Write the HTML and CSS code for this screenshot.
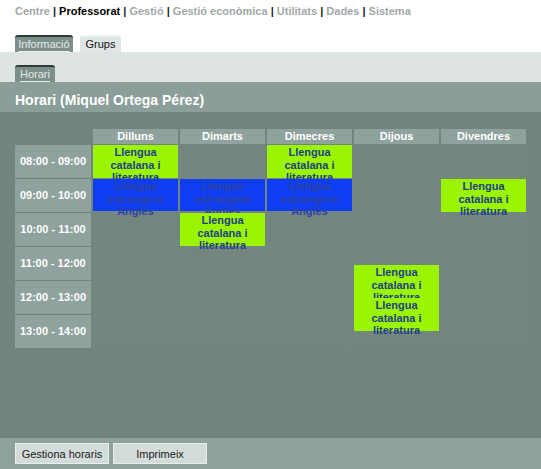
FILE: index.html
```html
<!DOCTYPE html>
<html lang="ca">
<head>
<meta charset="utf-8">
<title>Horari</title>
<link rel="stylesheet" href="styles.css">
</head>
<body>
<div class="topnav">
  <a class="nav">Centre</a> | <a class="nav active">Professorat</a> | <a class="nav">Gestió</a> | <a class="nav">Gestió econòmica</a> | <a class="nav">Utilitats</a> | <a class="nav">Dades</a> | <a class="nav">Sistema</a>
</div>
<div class="tabs">
  <div class="tab dark tab-info"><span>Informació</span></div>
  <div class="tab light tab-grups"><span>Grups</span></div>
</div>
<div class="band">
  <div class="tab dark tab-horari"><span>Horari</span></div>
</div>
<div class="titlebar">Horari (Miquel Ortega Pérez)</div>
<div class="main">
  <div class="sched-wrap">
    <div class="sched">
      <div class="corner"></div>
      <div class="head">Dilluns</div>
      <div class="head">Dimarts</div>
      <div class="head">Dimecres</div>
      <div class="head">Dijous</div>
      <div class="head">Divendres</div>

      <div class="time">08:00 - 09:00</div>
      <div class="empty"></div><div class="empty"></div><div class="empty"></div><div class="empty"></div><div class="empty"></div>
      <div class="time">09:00 - 10:00</div>
      <div class="empty"></div><div class="empty"></div><div class="empty"></div><div class="empty"></div><div class="empty"></div>
      <div class="time">10:00 - 11:00</div>
      <div class="empty"></div><div class="empty"></div><div class="empty"></div><div class="empty"></div><div class="empty"></div>
      <div class="time">11:00 - 12:00</div>
      <div class="empty"></div><div class="empty"></div><div class="empty"></div><div class="empty"></div><div class="empty"></div>
      <div class="time">12:00 - 13:00</div>
      <div class="empty"></div><div class="empty"></div><div class="empty"></div><div class="empty"></div><div class="empty"></div>
      <div class="time">13:00 - 14:00</div>
      <div class="empty"></div><div class="empty"></div><div class="empty"></div><div class="empty"></div><div class="empty"></div>
    </div>
    <div class="sched events">
      <div class="ev green c-dl r-08">Llengua catalana i literatura</div>
      <div class="ev green c-dc r-08">Llengua catalana i literatura</div>
      <div class="ev blue c-dl r-09">Llengua estrangera Anglès</div>
      <div class="ev blue c-dm r-09">Llengua estrangera Anglès</div>
      <div class="ev blue c-dc r-09">Llengua estrangera Anglès</div>
      <div class="ev green c-dv r-09">Llengua catalana i literatura</div>
      <div class="ev green c-dm r-10">Llengua catalana i literatura</div>
      <div class="ev green c-dj r-11 half">Llengua catalana i literatura</div>
      <div class="ev green c-dj r-12 half2">Llengua catalana i literatura</div>
    </div>
  </div>
</div>
<div class="bottombar">
  <button class="btn">Gestiona horaris</button>
  <button class="btn">Imprimeix</button>
</div>
</body>
</html>
```

FILE: styles.css
```css
html, body {
  margin: 0;
  padding: 0;
  background: #ffffff;
  font-family: "Liberation Sans", Arial, sans-serif;
}

.topnav {
  height: 35px;
  box-sizing: border-box;
  padding: 5px 0 0 15px;
  font-size: 11px;
  font-weight: bold;
  line-height: 13px;
  color: #1a1a1a;
}
.nav {
  color: #a0a9a8;
}
.nav.active {
  color: #000000;
}

.tabs {
  display: flex;
  gap: 7px;
  padding-left: 15px;
  height: 17px;
  align-items: flex-end;
}
.tab {
  height: 17px;
  box-sizing: border-box;
  font-size: 11px;
  line-height: 15px;
  text-align: center;
  border-radius: 3px 3px 0 0;
}
.tab.dark {
  background: #7d8f8b;
  border-top: 2px solid #2f3b39;
  color: #e3e9e8;
}
.tab.dark span {
  text-decoration: underline;
  text-decoration-color: #e8eeed;
  text-underline-offset: 3px;
}
.tab.light {
  background: #dfe6e5;
  border-top: 2px solid #eef2f1;
  color: #111111;
}
.tab-info { width: 58px; }
.tab-grups { width: 41px; }
.tab-horari { width: 40px; }

.band {
  background: #dde4e3;
  height: 30px;
  box-sizing: border-box;
  padding: 13px 0 0 15px;
  display: flex;
  align-items: flex-end;
}

.titlebar {
  background: #8b9e9a;
  height: 30px;
  box-sizing: border-box;
  padding: 10px 0 0 15px;
  color: #ffffff;
  font-size: 14px;
  font-weight: bold;
  line-height: 16px;
}

.main {
  background: #71847f;
  height: 326px;
  box-sizing: border-box;
  padding: 17px 0 0 15px;
}

.sched-wrap {
  display: grid;
  width: max-content;
}
.sched {
  grid-area: 1 / 1;
  display: grid;
  grid-template-columns: 76px repeat(5, 85px);
  grid-template-rows: 15px repeat(6, 33px);
  column-gap: 2px;
  row-gap: 1px;
  font-size: 11px;
  font-weight: bold;
}
.corner {
  background: transparent;
}
.head {
  background: #8fa29e;
  color: #ffffff;
  text-align: center;
  line-height: 15px;
}
.time {
  background: #8fa29e;
  color: #ffffff;
  text-align: center;
  line-height: 33px;
}
.empty {
  background: #73857f;
  border: 1px solid #77897f;
  box-sizing: border-box;
}

.ev {
  height: 33px;
  box-sizing: border-box;
  padding: 1px 2px 0;
  text-align: center;
  line-height: 12.5px;
  color: #21408a;
  overflow: visible;
  align-self: start;
}
.ev.green { background: #9bf500; }
.ev.blue {
  background: #0f3ef2;
  color: #2d42a4;
  height: 32px;
}
.c-dl { grid-column: 2; }
.c-dm { grid-column: 3; }
.c-dc { grid-column: 4; }
.c-dj { grid-column: 5; }
.c-dv { grid-column: 6; }
.r-08 { grid-row: 2; }
.r-09 { grid-row: 3; }
.r-10 { grid-row: 4; }
.r-11 { grid-row: 5; }
.r-12 { grid-row: 6; }
.half { margin-top: 18px; }
.half2 { margin-top: 17px; }

.bottombar {
  background: #8da19d;
  height: 31px;
  box-sizing: border-box;
  padding: 5px 0 0 15px;
  display: flex;
  gap: 4px;
}
.btn {
  width: 94px;
  height: 21px;
  margin: 0;
  padding: 0;
  background: #d4dcdb;
  border: 1px solid #e9eeed;
  font-family: "Liberation Sans", Arial, sans-serif;
  font-size: 11px;
  color: #1a1a1a;
}
```
